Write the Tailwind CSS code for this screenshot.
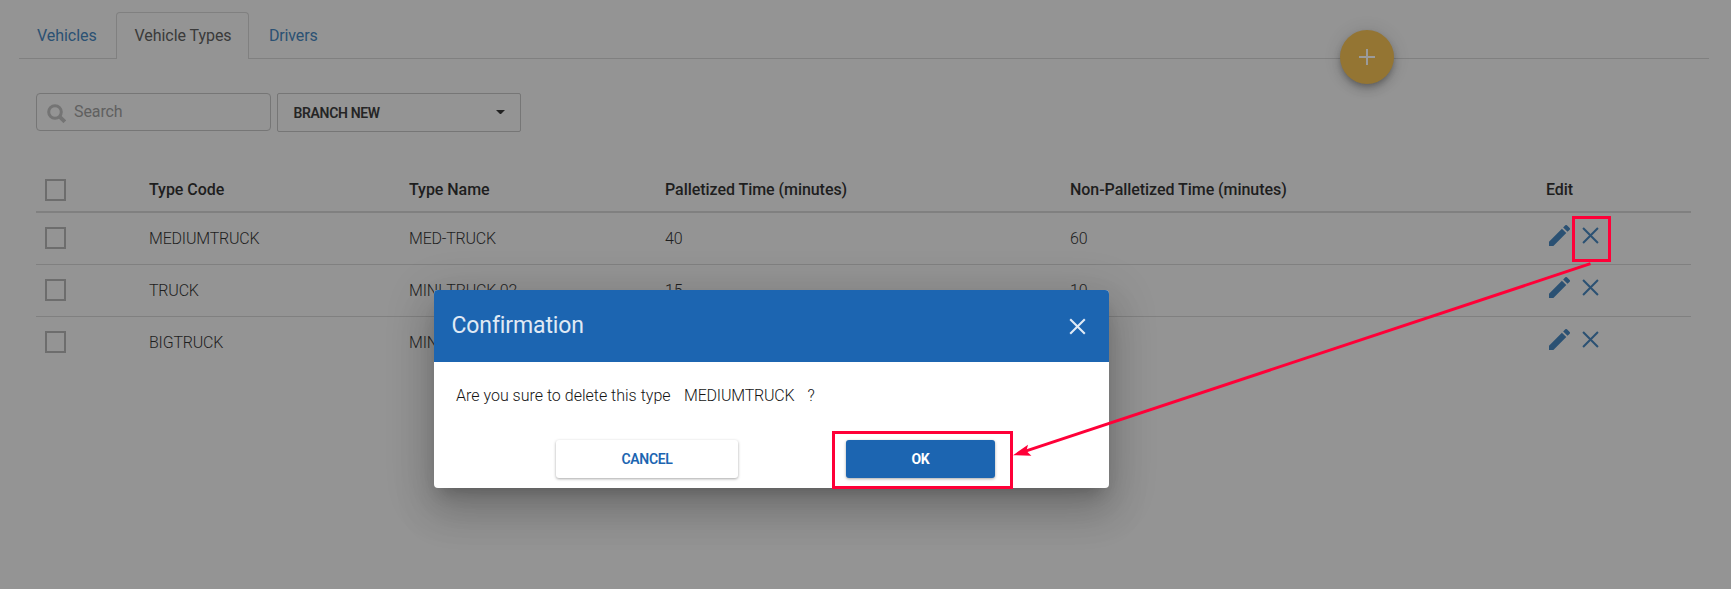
<!DOCTYPE html>
<html lang="en">
<head>
<meta charset="utf-8">
<title>Vehicle Types</title>
<script src="https://cdn.jsdelivr.net/npm/@tailwindcss/browser@4"></script>
</head>
<body class="relative h-[589px] w-[1731px] overflow-hidden bg-[#949494] font-[Roboto,sans-serif] text-base font-light text-[#1e1e1e]">
<svg class="hidden">
  <symbol id="pencil" viewBox="3 3 18 18"><path d="M3 17.25V21h3.75L17.81 9.94l-3.75-3.75L3 17.25zM20.71 7.04a1 1 0 0 0 0-1.41l-2.34-2.34a1 1 0 0 0-1.41 0l-1.83 1.83 3.75 3.75 1.83-1.83z" fill="currentColor"/></symbol>
  <symbol id="cross" viewBox="0 0 16 16"><path d="M1 1l14 14M15 1L1 15" stroke="currentColor" stroke-width="1.9" fill="none"/></symbol>
</svg>

<nav class="ml-[19px] flex h-[59px] w-[1690px] items-end font-normal text-[#2b5173]">
  <div class="h-[47px] w-[97px] border-b border-[#808080] pt-[12px] pl-[18px] tracking-[-0.05px]">Vehicles</div>
  <div class="h-[47px] w-[133px] rounded-t border border-b-0 border-[#808080] pt-[11px] pl-[17.5px] tracking-[-0.05px] text-[#3a3a3a]">Vehicle Types</div>
  <div class="h-[47px] flex-1 border-b border-[#808080] pt-[12px] pl-[20px] tracking-[-0.15px]">Drivers</div>
</nav>

<div class="absolute top-[30px] left-[1340px] flex size-[54px] items-center justify-center rounded-full bg-[#947533] shadow-[0_3px_5px_-1px_rgba(0,0,0,0.2),0_6px_10px_0_rgba(0,0,0,0.14),0_1px_18px_0_rgba(0,0,0,0.12)]">
  <svg class="size-4" viewBox="0 0 16 16"><path d="M8 0v16M0 8h16" stroke="#9b9b9b" stroke-width="2"/></svg>
</div>

<div class="mt-[34px] ml-[36px] flex gap-[6px]">
  <div class="flex h-[38px] w-[235px] rounded-[4px] border border-[#767676] pl-[10px]">
    <svg class="mt-[10px] size-[19px]" viewBox="0 0 19 19" fill="none" stroke="#747474"><circle cx="8" cy="8" r="6.3" stroke-width="3"/><path d="M12.6 12.6l5.2 5.2" stroke-width="3.8"/></svg>
    <span class="mt-[6px] ml-[8px] font-normal tracking-[-0.1px] text-[#606060]">Search</span>
  </div>
  <div class="flex h-[39px] w-[244px] items-center justify-between rounded-[2px] border border-[#767676] pr-[15.5px] pl-[15.5px] text-sm font-semibold tracking-[-0.35px] text-[#252525]">
    <span class="pt-[1px]">BRANCH NEW</span>
    <svg class="mb-px h-[4.5px] w-[9px]" viewBox="0 0 8 4"><path d="M0 0h8L4 4z" fill="#222"/></svg>
  </div>
</div>

<table class="mt-[32px] ml-[36px] w-[1655px] table-fixed border-separate border-spacing-0 text-left tracking-[-0.2px]">
  <colgroup><col class="w-[113px]"><col class="w-[260px]"><col class="w-[256px]"><col class="w-[405px]"><col class="w-[476px]"><col></colgroup>
  <thead>
    <tr class="h-[49px] tracking-[-0.05px] [&>th]:border-b-2 [&>th]:border-[#808080] [&>th]:font-medium">
      <th class="pt-[4px] pl-[9px]"><div class="h-[22px] w-[21px] border-2 border-[#6d6d6d]"></div></th>
      <th class="pt-[4px]">Type Code</th>
      <th class="pt-[4px]">Type Name</th>
      <th class="pt-[4px]">Palletized Time (minutes)</th>
      <th class="pt-[4px]">Non-Palletized Time (minutes)</th>
      <th class="pt-[4px]">Edit</th>
    </tr>
  </thead>
  <tbody>
    <tr class="h-[52px] [&>td]:border-b [&>td]:border-[#808080]">
      <td class="pb-px pl-[9px]"><div class="h-[22px] w-[21px] border-2 border-[#6d6d6d]"></div></td><td>MEDIUMTRUCK</td><td>MED-TRUCK</td><td>40</td><td>60</td>
      <td><div class="flex gap-[12px] pb-[6px] pl-[3px] text-[#2b5173]"><svg class="size-[21px]"><use href="#pencil"/></svg><svg class="mt-[2px] size-[17px]"><use href="#cross"/></svg></div></td>
    </tr>
    <tr class="h-[52px] [&>td]:border-b [&>td]:border-[#808080]">
      <td class="pb-px pl-[9px]"><div class="h-[22px] w-[21px] border-2 border-[#6d6d6d]"></div></td><td>TRUCK</td><td>MINI-TRUCK 02</td><td>15</td><td>10</td>
      <td><div class="flex gap-[12px] pb-[6px] pl-[3px] text-[#2b5173]"><svg class="size-[21px]"><use href="#pencil"/></svg><svg class="mt-[2px] size-[17px]"><use href="#cross"/></svg></div></td>
    </tr>
    <tr class="h-[52px] [&>td]:border-b [&>td]:border-transparent">
      <td class="pb-px pl-[9px]"><div class="h-[22px] w-[21px] border-2 border-[#6d6d6d]"></div></td><td>BIGTRUCK</td><td>MINI</td><td></td><td></td>
      <td><div class="flex gap-[12px] pb-[6px] pl-[3px] text-[#2b5173]"><svg class="size-[21px]"><use href="#pencil"/></svg><svg class="mt-[2px] size-[17px]"><use href="#cross"/></svg></div></td>
    </tr>
  </tbody>
</table>

<section class="absolute top-[290px] left-[434px] h-[198px] w-[675px] rounded-[4px] bg-white shadow-[0_11px_15px_-7px_rgba(0,0,0,0.2),0_24px_38px_3px_rgba(0,0,0,0.14),0_9px_46px_8px_rgba(0,0,0,0.12)]">
  <header class="flex h-[72px] justify-between rounded-t-[4px] bg-[#1c65b1] pr-[23px] pl-[17.5px] text-[#e0eaf5]">
    <h2 class="pt-[18px] text-[23px] leading-[36px] font-normal tracking-[-0.12px]">Confirmation</h2>
    <svg class="mt-[28px] size-[17px]"><path d="M1.2 1.2l14.6 14.6M15.8 1.2L1.2 15.8" stroke="currentColor" stroke-width="2.1"/></svg>
  </header>
  <p class="flex pt-[22px] pl-[22px] text-[#151515]"><span class="w-[228px]">Are you sure to delete this type</span><span class="w-[123.5px] tracking-[-0.2px]">MEDIUMTRUCK</span><span>?</span></p>
  <div class="flex pt-[32px] pl-[122px] text-sm font-medium">
    <button class="h-[38px] w-[182px] rounded-[3px] bg-white font-semibold tracking-[-0.35px] text-[#1c65b1] shadow-[0_1px_3px_rgba(0,0,0,0.35)]">CANCEL</button>
    <button class="ml-[108px] h-[38px] w-[149px] rounded-[3px] bg-[#1c65b1] font-bold tracking-[-0.2px] text-white shadow-[0_1px_3px_rgba(0,0,0,0.35)]">OK</button>
  </div>
</section>

<svg class="absolute inset-0 h-[589px] w-[1731px]" fill="none" stroke="#ff0038" stroke-width="3">
  <rect x="833.5" y="432.5" width="178" height="55"/>
  <rect x="1573.5" y="217.5" width="36" height="43"/>
  <path d="M1590.5 263.7L1024 451.6"/>
  <path d="M1013 455.2l15-10.4-1.6 6.2 5 4.8z" fill="#ff0038" stroke="none"/>
</svg>
</body>
</html>
